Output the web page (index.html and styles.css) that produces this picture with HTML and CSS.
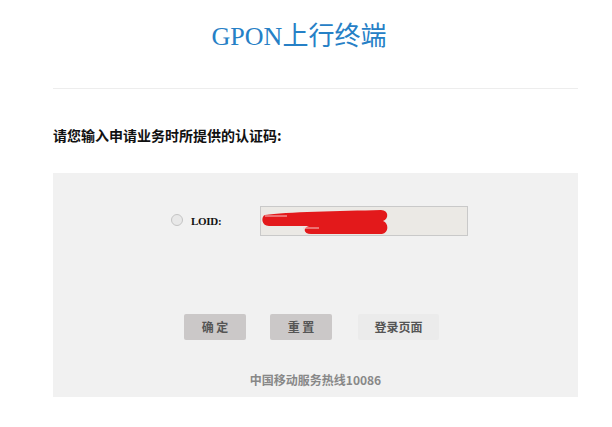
FILE: index.html
```html
<!DOCTYPE html>
<html>
<head>
<meta charset="UTF-8">
<link rel="stylesheet" href="styles.css">
</head>
<body>
<div id="page">
    <div class="top-title">GPON上行终端</div>
    <div class="prompt">请您输入申请业务时所提供的认证码:</div>
    <div class="panel">
        <div class="loid-row">
            <span class="radio"></span>
            <span class="loid-label">LOID:</span>
            <div class="loid-input">
                <svg class="scribble" width="208" height="29" viewBox="0 0 208 29">
                    <path d="M4 7 C24 4 80 3 120 2 C128 2 128 11 122 13 C128 15 128 25 121 26 L50 26 C42 26 42 19 48 18 L8 18 C0 18 0 8 4 7 Z" fill="#e3191b"/>
                    <path d="M4 8 L26 8" stroke="#f6c9c9" stroke-width="1" fill="none"/>
                    <path d="M42 20 L58 20" stroke="#f6c9c9" stroke-width="1" fill="none"/>
                </svg>
            </div>
        </div>
        <div class="btn-row">
            <span class="btn">确 定</span>
            <span class="btn">重 置</span>
            <span class="btn btn-light">登录页面</span>
        </div>
        <div class="hotline">中国移动服务热线10086</div>
    </div>
</div>
</body>
</html>
```

FILE: styles.css
```css
body{
margin: 0;
background: #ffffff;
font-family: "Liberation Serif", "Noto Sans CJK SC", serif;
}

#page{
width: 525px;
margin-left: 53px;
}

.top-title{
height: 88px;
line-height: 74px;
border-bottom: 1px solid #ededed;
text-align: center;
font-size: 26px;
color: #2680c6;
padding-right: 33px;
}

.prompt{
margin-top: 34px;
height: 50px;
font-size: 14px;
font-weight: bold;
color: #111111;
font-family: "Noto Sans CJK SC", sans-serif;
line-height: 24px;
}

.panel{
background: #f1f1f1;
padding-top: 33px;
padding-bottom: 9px;
}

.loid-row{
display: flex;
align-items: center;
height: 30px;
}

.radio{
width: 10px;
height: 10px;
border-radius: 50%;
border: 1px solid #c4c4c4;
background: #e8e8e8;
margin-left: 118px;
margin-top: -3px;
}

.loid-label{
font-size: 11px;
font-weight: bold;
color: #111111;
margin-left: 8px;
width: 69px;
letter-spacing: -0.3px;
}

.loid-input{
position: relative;
width: 206px;
height: 28px;
border: 1px solid #c9c9c9;
background: #ebe9e5;
}

.scribble{
position: absolute;
left: 0;
top: 1px;
}

.btn-row{
display: flex;
margin-top: 78px;
padding-left: 131px;
}

.btn{
height: 26px;
line-height: 26px;
width: 62px;
margin-right: 24px;
text-align: center;
background: #cbc8c8;
border-radius: 2px;
font-size: 12px;
font-weight: bold;
color: #555555;
font-family: "Noto Sans CJK SC", sans-serif;
}

.btn-light{
width: 81px;
background: #ebebeb;
margin-left: 2px;
}

.hotline{
margin-top: 32px;
text-align: center;
font-size: 12px;
line-height: 16px;
font-weight: bold;
color: #888888;
font-family: "Noto Sans CJK SC", sans-serif;
}
```
